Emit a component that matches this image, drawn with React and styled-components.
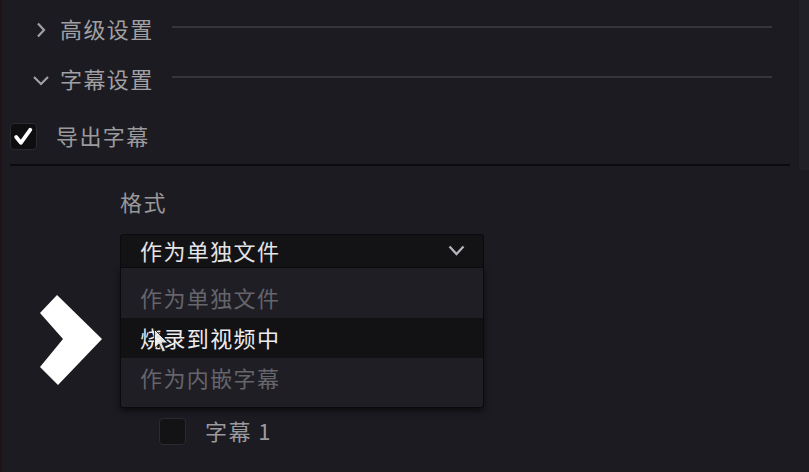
import React from "react";
import styled, { createGlobalStyle } from "styled-components";

const Global = createGlobalStyle`
  html, body { margin: 0; padding: 0; background: #1c1b21; }
  body { font-family: "Noto Sans CJK SC", "Noto Sans", sans-serif; }
`;

const Panel = styled.div`
  position: relative;
  width: 809px;
  height: 472px;
  overflow: hidden;
  box-sizing: border-box;
  padding-top: 5px;
  background: #1c1b21;
  border-left: 2px solid #1d1418;
  display: flex;
  flex-direction: column;
`;

const SectionHeader = styled.div`
  display: flex;
  align-items: center;
  height: 50px;
  padding-left: 31px;
  padding-right: 37px;
`;

const HeaderIcon = styled.svg`
  width: 16px;
  height: 16px;
  flex: none;
  margin-right: 11px;
`;

const HeaderTitle = styled.span`
  font-size: 22px;
  letter-spacing: 1.4px;
  color: #a0a0a4;
  line-height: 30px;
  padding-bottom: 4px;
  white-space: nowrap;
`;

const HeaderRule = styled.div`
  flex: 1;
  height: 2px;
  margin-left: 18px;
  margin-top: -6px;
  background: #35343a;
`;

const CheckRow = styled.label`
  display: flex;
  align-items: center;
  gap: 19px;
  margin-top: 18px;
  padding-left: ${(p) => p.$indent}px;
  height: 27px;
`;

const Box = styled.span`
  width: 27px;
  height: 27px;
  flex: none;
  box-sizing: border-box;
  border-radius: 4px;
  background: ${(p) => (p.$checked ? "#0e0d10" : "#131215")};
  border: 1px solid #2b2a30;
  display: flex;
  align-items: center;
  justify-content: center;
`;

const CheckText = styled.span`
  font-size: 22px;
  letter-spacing: 1.4px;
  color: #9a9a9e;
  line-height: 30px;
  padding-bottom: 4px;
`;

const Divider = styled.div`
  height: 2px;
  margin: 14px 19px 0 8px;
  background: #0c0b0e;
`;

const FieldLabel = styled.div`
  margin-top: 20px;
  padding-left: 118px;
  font-size: 22px;
  letter-spacing: 1.4px;
  line-height: 30px;
  padding-bottom: 2px;
  color: #98989c;
`;

const SelectWrap = styled.div`
  position: relative;
  margin-top: 16px;
  margin-left: 118px;
  width: 364px;
`;

const SelectHead = styled.div`
  height: 34px;
  box-sizing: border-box;
  display: flex;
  align-items: center;
  justify-content: space-between;
  padding: 0 18px 2px 19px;
  background: #131215;
  border: 1px solid #0b0a0d;
  border-radius: 3px 3px 0 0;
  font-size: 22px;
  letter-spacing: 1.4px;
  color: #e4e4e6;
`;

const Menu = styled.ul`
  position: absolute;
  top: 34px;
  left: 0;
  width: 364px;
  height: 140px;
  box-sizing: border-box;
  margin: 0;
  padding: 10px 0;
  list-style: none;
  background: #1f1e25;
  border: 1px solid #0b0a0d;
  border-top: none;
  border-radius: 0 0 3px 3px;
  box-shadow: 0 3px 6px rgba(0, 0, 0, 0.55);
  z-index: 2;
`;

const MenuItem = styled.li`
  height: 40px;
  box-sizing: border-box;
  display: flex;
  align-items: center;
  padding: 0 0 3px 19px;
  font-size: 22px;
  letter-spacing: 1.4px;
  color: ${(p) => (p.$active ? "#ececee" : "#65656b")};
  background: ${(p) => (p.$active ? "#121114" : "transparent")};
`;

const SubRow = styled(CheckRow)`
  margin-top: 150px;
`;

const Overlay = styled.svg`
  position: absolute;
  left: ${(p) => p.$x}px;
  top: ${(p) => p.$y}px;
  z-index: 5;
  pointer-events: none;
`;

const RightStrip = styled.div`
  position: absolute;
  top: 0;
  right: 0;
  width: 10px;
  height: 170px;
  background: #212026;
`;

export default function App() {
  return (
    <>
      <Global />
      <Panel>
        <RightStrip />
        <SectionHeader>
          <HeaderIcon viewBox="0 0 16 16">
            <path d="M5 1.5 L11 8 L5 14.5" fill="none" stroke="#a0a0a4" strokeWidth="2.2" strokeLinejoin="miter" />
          </HeaderIcon>
          <HeaderTitle>高级设置</HeaderTitle>
          <HeaderRule />
        </SectionHeader>
        <SectionHeader>
          <HeaderIcon viewBox="0 0 16 16">
            <path d="M1 5 L8 12 L15 5" fill="none" stroke="#a0a0a4" strokeWidth="2.2" />
          </HeaderIcon>
          <HeaderTitle>字幕设置</HeaderTitle>
          <HeaderRule />
        </SectionHeader>

        <CheckRow $indent={8}>
          <Box $checked>
            <svg width="21" height="21" viewBox="0 0 20 20">
              <path d="M3 10.5 L7.5 16 L16.5 3.5" fill="none" stroke="#ffffff" strokeWidth="3.6" strokeLinecap="round" strokeLinejoin="round" />
            </svg>
          </Box>
          <CheckText>导出字幕</CheckText>
        </CheckRow>

        <Divider />

        <FieldLabel>格式</FieldLabel>

        <SelectWrap>
          <SelectHead>
            <span>作为单独文件</span>
            <svg width="17" height="11" viewBox="0 0 17 11">
              <path d="M1.5 1.5 L8.5 9 L15.5 1.5" fill="none" stroke="#b4b4b8" strokeWidth="2.3" />
            </svg>
          </SelectHead>
          <Menu>
            <MenuItem>作为单独文件</MenuItem>
            <MenuItem $active>烧录到视频中</MenuItem>
            <MenuItem>作为内嵌字幕</MenuItem>
          </Menu>
        </SelectWrap>

        <SubRow $indent={157}>
          <Box />
          <CheckText>字幕 1</CheckText>
        </SubRow>

        <Overlay $x={36} $y={295} width="64" height="92" viewBox="0 0 64 92">
          <polygon points="19,0 64,44 20,90 2,72 25,44 2,18" fill="#ffffff" />
        </Overlay>

        <Overlay $x={151} $y={328} width="20" height="28" viewBox="0 0 20 28">
          <path
            d="M1.5 1.5 L1.5 20 L6 16 L9.5 24 L12.5 22.6 L9 15 L15 15 Z"
            fill="#f4f4f4"
            stroke="#222"
            strokeWidth="1"
            strokeLinejoin="round"
            opacity="0.9"
          />
        </Overlay>
      </Panel>
    </>
  );
}
